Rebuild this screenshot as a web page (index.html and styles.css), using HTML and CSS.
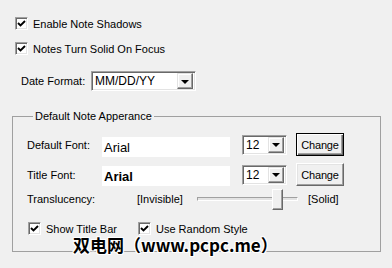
FILE: index.html
```html
<!DOCTYPE html>
<html lang="en">
<head>
    <meta charset="UTF-8">
    <title>Note Options</title>
    <link rel="stylesheet" href="styles.css">
</head>
<body>
    <div class="page">
        <div class="check-row">
            <span class="checkbox checked"><svg viewBox="0 0 11 11"><polyline points="2,5 4.5,7.5 9,3"/></svg></span>
            <span>Enable Note Shadows</span>
        </div>
        <div class="check-row second">
            <span class="checkbox checked"><svg viewBox="0 0 11 11"><polyline points="2,5 4.5,7.5 9,3"/></svg></span>
            <span>Notes Turn Solid On Focus</span>
        </div>
        <div class="date-row">
            <span class="date-label">Date Format:</span>
            <div class="combo date-combo">
                <span class="combo-text">MM/DD/YY</span>
                <span class="combo-btn"><i class="arrow"></i></span>
            </div>
        </div>

        <fieldset class="group">
            <legend>Default Note Apperance</legend>
            <div class="font-row">
                <span class="field-label">Default Font:</span>
                <div class="font-box">Arial</div>
                <div class="combo size-combo">
                    <span class="combo-text">12</span>
                    <span class="combo-btn"><i class="arrow"></i></span>
                </div>
                <button class="btn default">Change</button>
            </div>
            <div class="font-row next">
                <span class="field-label">Title Font:</span>
                <div class="font-box bold">Arial</div>
                <div class="combo size-combo">
                    <span class="combo-text">12</span>
                    <span class="combo-btn"><i class="arrow"></i></span>
                </div>
                <button class="btn">Change</button>
            </div>
            <div class="slider-row">
                <span class="slider-label">Translucency:</span>
                <span class="slider-min">[Invisible]</span>
                <div class="slider">
                    <div class="track"></div>
                    <div class="thumb"></div>
                </div>
                <span class="slider-max">[Solid]</span>
            </div>
            <div class="option-row">
                <div class="option">
                    <span class="checkbox checked"><svg viewBox="0 0 11 11"><polyline points="2,5 4.5,7.5 9,3"/></svg></span>
                    <span>Show Title Bar</span>
                </div>
                <div class="option">
                    <span class="checkbox checked"><svg viewBox="0 0 11 11"><polyline points="2,5 4.5,7.5 9,3"/></svg></span>
                    <span>Use Random Style</span>
                </div>
            </div>
        </fieldset>
    </div>

    <div class="watermark">双电网（www.pcpc.me）</div>
</body>
</html>
```

FILE: styles.css
```css
body {
    margin: 0;
    width: 392px;
    height: 268px;
    background-color: #f0f0f0;
    font-family: "Liberation Sans", Arial, sans-serif;
    font-size: 11px;
    color: #000;
    position: relative;
    overflow: hidden;
}
.page {
    padding-top: 17px;
}
.check-row {
    display: flex;
    align-items: center;
    gap: 5px;
    height: 13px;
    margin-left: 15px;
}
.check-row.second {
    margin-top: 12px;
}
.checkbox {
    box-sizing: border-box;
    width: 13px;
    height: 13px;
    background-color: white;
    border: 1px solid;
    border-color: #a0a0a0 #fff #fff #a0a0a0;
    box-shadow: inset 1px 1px #696969, inset -1px -1px #e3e3e3;
    display: flex;
    align-items: center;
    justify-content: center;
    flex-shrink: 0;
}
.checkbox svg {
    width: 11px;
    height: 11px;
}
.checkbox polyline {
    fill: none;
    stroke: #000;
    stroke-width: 1.9;
}
.date-row {
    display: flex;
    align-items: center;
    margin: 16px 0 0 21px;
}
.date-label {
    width: 70px;
}
.combo {
    box-sizing: border-box;
    height: 20px;
    background-color: white;
    border: 1px solid;
    border-color: #a0a0a0 #fff #fff #a0a0a0;
    box-shadow: inset 1px 1px #696969, inset -1px -1px #e3e3e3;
    display: flex;
    align-items: center;
    padding: 2px;
}
.date-combo {
    width: 105px;
}
.combo-text {
    flex-grow: 1;
    font-size: 12px;
    padding-left: 1px;
}
.combo-btn {
    box-sizing: border-box;
    width: 16px;
    height: 16px;
    background-color: #f0f0f0;
    border: 1px solid;
    border-color: #e3e3e3 #696969 #696969 #e3e3e3;
    box-shadow: inset -1px -1px #a0a0a0, inset 1px 1px #fff;
    display: flex;
    align-items: center;
    justify-content: center;
}
.arrow {
    width: 0;
    height: 0;
    border-left: 4px solid transparent;
    border-right: 4px solid transparent;
    border-top: 4px solid #000;
    margin-top: 1px;
}
.group {
    margin: 19px 11px 0 12px;
    padding: 10px 0 16px 14px;
    border: 1px solid #a0a0a0;
    min-width: 0;
}
.group legend {
    margin-left: 6px;
    padding: 0 2px;
    line-height: 13px;
}
.font-row {
    display: flex;
    align-items: center;
    height: 23px;
}
.font-row.next {
    margin-top: 7px;
}
.field-label {
    width: 75px;
}
.font-box {
    box-sizing: border-box;
    width: 128px;
    height: 20px;
    margin-top: 4px;
    background-color: white;
    padding: 3px 0 0 2px;
    font-size: 13px;
    line-height: 15px;
}
.font-box.bold {
    font-weight: bold;
    margin-top: 3px;
}
.size-combo {
    width: 45px;
    margin-left: 12px;
}
.btn {
    box-sizing: border-box;
    width: 48px;
    height: 23px;
    margin-left: 9px;
    padding: 0;
    font-family: "Liberation Sans", Arial, sans-serif;
    font-size: 11px;
    letter-spacing: -0.2px;
    color: #000;
    background-color: #f0f0f0;
    border: 1px solid;
    border-color: #fff #696969 #696969 #fff;
    box-shadow: inset -1px -1px #a0a0a0, inset 1px 1px #e3e3e3;
}
.btn.default {
    border: 1px solid #000;
    box-shadow: inset 1px 1px #fff, inset -1px -1px #696969, inset -2px -2px #a0a0a0;
}
.slider-row {
    display: flex;
    align-items: center;
    height: 22px;
    margin-top: 2px;
}
.slider-label {
    width: 110px;
}
.slider-min {
    width: 60px;
}
.slider {
    position: relative;
    width: 101px;
    height: 22px;
    display: flex;
    align-items: center;
}
.track {
    width: 100%;
    height: 4px;
    box-sizing: border-box;
    border: 1px solid;
    border-color: #a0a0a0 #fff #fff #a0a0a0;
    background-color: #e3e3e3;
}
.thumb {
    position: absolute;
    left: 75px;
    top: 1px;
    box-sizing: border-box;
    width: 11px;
    height: 21px;
    background-color: #f0f0f0;
    border: 1px solid;
    border-color: #fff #696969 #696969 #fff;
    box-shadow: inset -1px -1px #a0a0a0;
}
.slider-max {
    margin-left: 10px;
}
.option-row {
    display: flex;
    align-items: center;
    height: 13px;
    margin-top: 12px;
    padding-left: 1px;
}
.option {
    display: flex;
    align-items: center;
    gap: 5px;
    width: 110px;
}
.watermark {
    position: absolute;
    left: 73px;
    top: 236px;
    font-family: "Noto Sans CJK SC", "DejaVu Sans", sans-serif;
    font-size: 17px;
    font-weight: bold;
    line-height: 18px;
    color: #000;
    white-space: nowrap;
    text-shadow: 1px 0 #fff, -1px 0 #fff, 0 1px #fff, 0 -1px #fff, 1px 1px #fff, -1px -1px #fff, 1px -1px #fff, -1px 1px #fff;
}
```
